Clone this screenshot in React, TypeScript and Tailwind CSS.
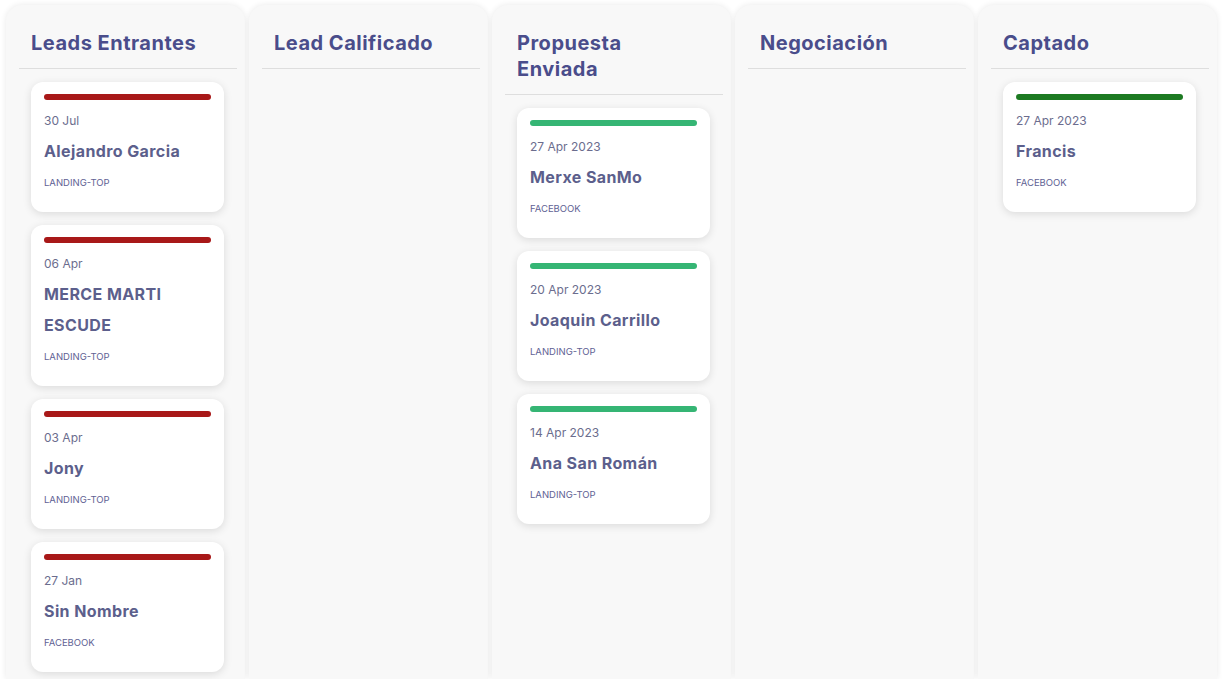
type Lead = {
  date: string
  name: string
  source: string
}

type Column = {
  title: string
  bar: string
  leads: Lead[]
}

const columns: Column[] = [
  {
    title: "Leads Entrantes",
    bar: "bg-[#a81818]",
    leads: [
      { date: "30 Jul", name: "Alejandro Garcia", source: "LANDING-TOP" },
      { date: "06 Apr", name: "MERCE MARTI ESCUDE", source: "LANDING-TOP" },
      { date: "03 Apr", name: "Jony", source: "LANDING-TOP" },
      { date: "27 Jan", name: "Sin Nombre", source: "FACEBOOK" },
    ],
  },
  { title: "Lead Calificado", bar: "bg-[#a81818]", leads: [] },
  {
    title: "Propuesta Enviada",
    bar: "bg-[#35b574]",
    leads: [
      { date: "27 Apr 2023", name: "Merxe SanMo", source: "FACEBOOK" },
      { date: "20 Apr 2023", name: "Joaquin Carrillo", source: "LANDING-TOP" },
      { date: "14 Apr 2023", name: "Ana San Román", source: "LANDING-TOP" },
    ],
  },
  { title: "Negociación", bar: "bg-[#a81818]", leads: [] },
  {
    title: "Captado",
    bar: "bg-[#1d7a22]",
    leads: [{ date: "27 Apr 2023", name: "Francis", source: "FACEBOOK" }],
  },
]

function LeadCard({ lead, bar }: { lead: Lead; bar: string }) {
  return (
    <div className="w-[193px] rounded-xl bg-white px-[13px] pt-3 pb-[21px] shadow-[0_2px_8px_rgba(0,0,0,0.12)]">
      <div className={`h-[6px] rounded-full ${bar}`} />
      <p className="mt-[11px] text-[12px] leading-5 text-[#6b6d8e]">{lead.date}</p>
      <p className="mt-[5px] text-[16px] font-bold leading-[31px] tracking-[0.4px] text-[#5c5f8c]">
        {lead.name}
      </p>
      <p className="mt-2 text-[9.5px] leading-4 text-[#5f6294]">{lead.source}</p>
    </div>
  )
}

export default function App() {
  return (
    <div className="flex h-[679px] gap-[4px] overflow-hidden bg-white px-[6px] pt-[5px] font-['Inter',sans-serif]">
      {columns.map((col) => (
        <div
          key={col.title}
          className="flex w-[239px] shrink-0 flex-col rounded-t-2xl bg-[#f8f8f8] shadow-[0_0_6px_rgba(0,0,0,0.09)]"
        >
          <div className="ml-[13px] mr-2 border-b border-[#dedede] pl-3 pt-[25px] pb-3">
            <h2 className="max-w-[180px] text-[20px] font-bold leading-[26px] tracking-[0.5px] text-[#4a4d8b]">
              {col.title}
            </h2>
          </div>
          <div className="flex flex-col gap-[13px] pt-[13px] pl-[25px]">
            {col.leads.map((lead) => (
              <LeadCard key={lead.name} lead={lead} bar={col.bar} />
            ))}
          </div>
        </div>
      ))}
    </div>
  )
}
